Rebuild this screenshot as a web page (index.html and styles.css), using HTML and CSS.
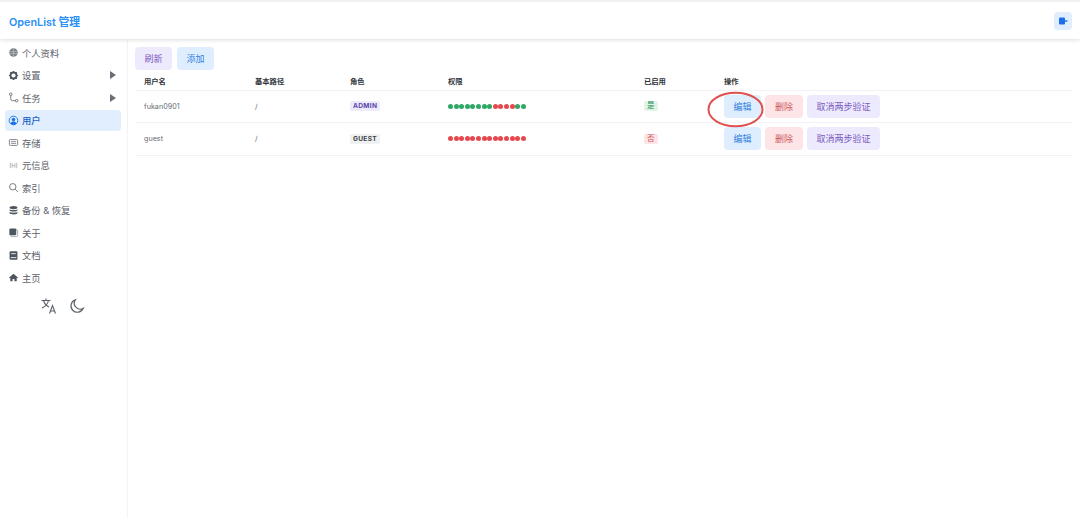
FILE: index.html
```html
<!DOCTYPE html>
<html lang="en">
<head>
  <meta charset="UTF-8">
  <title>OpenList 管理</title>
  <link rel="stylesheet" href="styles.css">
</head>
<body>

<header class="topbar">
  <div class="brand">OpenList 管理</div>
  <button class="logout" aria-label="logout">
    <svg width="10" height="10" viewBox="0 0 10 10"><rect x="1" y="1.5" width="6" height="7" rx="1" fill="#1a6fe8"/><path d="M7 5h2.5" stroke="#1a6fe8" stroke-width="1.4"/></svg>
  </button>
</header>

<div class="layout">
  <nav class="sidebar">
    <a class="nav-item">
      <svg class="nav-icon" viewBox="0 0 12 12"><circle cx="6" cy="6" r="4.6" fill="#7b8088"/><path d="M2 5h8M2 7.2h8M6 1.5v9" stroke="#c4c6ca" stroke-width=".7"/></svg>
      个人资料
    </a>
    <a class="nav-item">
      <svg class="nav-icon" viewBox="0 0 12 12"><circle cx="6" cy="6" r="3.3" fill="none" stroke="#4f555e" stroke-width="2"/><path d="M6 1v10M1 6h10M2.5 2.5l7 7M9.500 2.500l-7 7" stroke="#4f555e" stroke-width="1.300" stroke-dasharray="1.600 7"/></svg>
      设置
      <span class="caret"></span>
    </a>
    <a class="nav-item">
      <svg class="nav-icon" viewBox="0 0 12 12" fill="none" stroke="#5c626b" stroke-width=".9"><circle cx="3" cy="2.500" r="1.400"/><circle cx="9.500" cy="9.500" r="1.400"/><path d="M3 4v3.500a2 2 0 0 0 2 2h3"/></svg>
      任务
      <span class="caret"></span>
    </a>
    <a class="nav-item active">
      <svg class="nav-icon" viewBox="0 0 12 12"><circle cx="6" cy="6" r="4.700" fill="none" stroke="#1a6fe8" stroke-width="1"/><circle cx="6" cy="4.800" r="1.900" fill="#1a6fe8"/><path d="M2.800 9.200c.6-1.600 1.800-2.200 3.200-2.200s2.600.6 3.200 2.200a4.600 4.600 0 0 1-6.400 0z" fill="#1a6fe8"/></svg>
      用户
    </a>
    <a class="nav-item">
      <svg class="nav-icon" viewBox="0 0 12 12" fill="none" stroke="#6a7078" stroke-width=".9"><rect x="1.500" y="2.800" width="9" height="6.400" rx="1"/><path d="M3.200 5h5.600M3.200 7h5.600" stroke-width=".8"/></svg>
      存储
    </a>
    <a class="nav-item">
      <svg class="nav-icon" viewBox="0 0 12 12" fill="none" stroke="#a0a4aa" stroke-width=".8"><path d="M2.500 3v6M9.500 3v6M4.500 3.500v5M7.500 3.500v5M4.500 6h3"/></svg>
      元信息
    </a>
    <a class="nav-item">
      <svg class="nav-icon" viewBox="0 0 12 12" fill="none" stroke="#5c626b" stroke-width=".9"><circle cx="5.200" cy="5.200" r="3.500"/><path d="M8 8l2.800 2.800"/></svg>
      索引
    </a>
    <a class="nav-item">
      <svg class="nav-icon" viewBox="0 0 12 12" fill="#4f555e"><ellipse cx="6" cy="2.800" rx="4.300" ry="1.700"/><path d="M1.700 4.500c1 1.300 7.600 1.300 8.600 0v1.600c-1 1.400-7.600 1.400-8.600 0zM1.700 7.400c1 1.300 7.600 1.300 8.600 0v1.700c-1 1.700-7.600 1.700-8.600 0z"/></svg>
      备份 &amp; 恢复
    </a>
    <a class="nav-item">
      <svg class="nav-icon" viewBox="0 0 12 12"><rect x="3" y="3" width="7.500" height="7.500" rx="1.200" fill="none" stroke="#7b8088" stroke-width=".7"/><rect x="1.500" y="1.500" width="7.500" height="7.500" rx="1.200" fill="#4f555e"/></svg>
      关于
    </a>
    <a class="nav-item">
      <svg class="nav-icon" viewBox="0 0 12 12"><path d="M3 1.300h6.500a.8.8 0 0 1 .8.8v7.800a.8.8 0 0 1-.8.800H3a1.300 1.300 0 0 1-1.300-1.300V2.600A1.300 1.300 0 0 1 3 1.300z" fill="#4f555e"/><path d="M3.500 4h5M3 8.300h6" stroke="#fff" stroke-width=".9"/></svg>
      文档
    </a>
    <a class="nav-item">
      <svg class="nav-icon" viewBox="0 0 12 12" fill="#4f555e"><path d="M6 1.800L.9 6.300l.6.600 1-.8V10.200h2.500V7.500h2v2.700h2.500V6.100l1 .8.600-.6z"/></svg>
      主页
    </a>
    <div class="sidebar-tools">
      <svg width="18" height="18" viewBox="0 0 18 18" fill="none" stroke="#5c626b" stroke-width="1.100"><path d="M1.500 3.500h9M6 1.500v2M8.500 3.500c-.8 3.500-3 6-6.500 7.500M3.500 3.500c.8 3 3 5.200 5.500 6.500"/><path d="M9.500 16.500l3-8 3 8M10.500 14h4"/></svg>
      <svg width="16" height="16" viewBox="0 0 16 16" fill="none" stroke="#5c626b" stroke-width="1.200"><path d="M6.300 1.800a6.400 6.400 0 1 0 8 8.500 6 6 0 0 1-8-8.500z"/></svg>
    </div>
  </nav>

  <main class="content">
    <div class="toolbar">
      <button class="btn purple">刷新</button>
      <button class="btn blue">添加</button>
    </div>

    <table class="users">
      <thead>
        <tr>
          <th class="col-name">用户名</th>
          <th class="col-path">基本路径</th>
          <th class="col-role">角色</th>
          <th class="col-perm">权限</th>
          <th class="col-on">已启用</th>
          <th>操作</th>
        </tr>
      </thead>
      <tbody>
        <tr>
          <td>fukan0901</td>
          <td>/</td>
          <td><span class="role admin">ADMIN</span></td>
          <td>
            <div class="dots">
              <i class="g"></i><i class="g"></i><i class="g"></i><i class="g"></i><i class="g"></i><i class="g"></i><i class="g"></i><i class="g"></i><i class="r"></i><i class="r"></i><i class="r"></i><i class="r"></i><i class="g"></i><i class="g"></i>
            </div>
          </td>
          <td><span class="flag yes">是</span></td>
          <td>
            <div class="actions">
              <button class="btn blue edit">编辑
                <svg class="mark" width="57" height="37" viewBox="0 0 57 37"><ellipse cx="28.500" cy="18.500" rx="27" ry="16.800" fill="none" stroke="#e0504f" stroke-width="2"/></svg>
              </button>
              <button class="btn red">删除</button>
              <button class="btn purple">取消两步验证</button>
            </div>
          </td>
        </tr>
        <tr>
          <td>guest</td>
          <td>/</td>
          <td><span class="role guest">GUEST</span></td>
          <td>
            <div class="dots">
              <i class="r"></i><i class="r"></i><i class="r"></i><i class="r"></i><i class="r"></i><i class="r"></i><i class="r"></i><i class="r"></i><i class="r"></i><i class="r"></i><i class="r"></i><i class="r"></i><i class="r"></i><i class="r"></i>
            </div>
          </td>
          <td><span class="flag no">否</span></td>
          <td>
            <div class="actions">
              <button class="btn blue">编辑</button>
              <button class="btn red">删除</button>
              <button class="btn purple">取消两步验证</button>
            </div>
          </td>
        </tr>
      </tbody>
    </table>
  </main>
</div>

</body>
</html>
```

FILE: styles.css
```css
* {
  box-sizing: border-box;
}

body {
  margin: 0;
  height: 518px;
  overflow: hidden;
  background: #fff;
  color: #555b64;
  font-family: "Inter", "Noto Sans CJK SC", sans-serif;
  font-size: 9px;
}

.topbar {
  height: 37px;
  margin-top: 2px;
  padding: 0 8px 0 9px;
  display: flex;
  align-items: center;
  justify-content: space-between;
  background: #fff;
  box-shadow: 0 -2px 0 #f1f1f2, 0 1px 4px rgba(0,0,0,0.14);
  position: relative;
}

.brand {
  color: #2a90f5;
  font-size: 10.800px;
  font-weight: 600;
}

.logout {
  width: 18px;
  height: 18px;
  padding: 0;
  border: none;
  border-radius: 4px;
  background: #e0edfd;
  display: flex;
  align-items: center;
  justify-content: center;
}

.layout {
  display: flex;
  height: 479px;
}

.sidebar {
  width: 128px;
  padding: 3.500px 6px 0 5px;
  border-right: 1px solid #f2f3f4;
}

.nav-item {
  height: 20.500px;
  margin-bottom: 2px;
  padding-left: 3px;
  border-radius: 4px;
  display: flex;
  align-items: center;
  gap: 3px;
  color: #5d636c;
  font-size: 9.300px;
}

.nav-item.active {
  background: #e0eefe;
  color: #1b62c9;
  font-weight: 500;
}

.nav-icon {
  width: 11px;
  height: 11px;
  flex: none;
}

.caret {
  margin-left: auto;
  margin-right: 5px;
  border-left: 6px solid #6a6f77;
  border-top: 4.500px solid transparent;
  border-bottom: 4.500px solid transparent;
}

.sidebar-tools {
  margin-top: 8.500px;
  padding-right: 1px;
  display: flex;
  justify-content: center;
  align-items: center;
  gap: 11px;
}

.content {
  flex: 1;
  padding: 8px 8px 0 7px;
}

.toolbar {
  display: flex;
  gap: 5px;
}

.btn {
  height: 23px;
  padding: 0 9.500px;
  border: none;
  border-radius: 4px;
  font-family: inherit;
  font-size: 9px;
  white-space: nowrap;
}

.btn.purple {
  background: #eeeafd;
  color: #7a5bc0;
}

.btn.blue {
  background: #dfeeff;
  color: #2f7de0;
}

.btn.red {
  padding: 0 10px;
  background: #fde4e6;
  color: #cf5a60;
}

.users {
  width: 100%;
  margin-top: 0;
  border-collapse: collapse;
  table-layout: fixed;
}

.users th {
  height: 20px;
  padding: 3px 0 0 9px;
  text-align: left;
  color: #30343a;
  font-size: 7.300px;
  font-weight: 600;
  border-bottom: 1px solid #f1f2f3;
}

.users td {
  height: 32.500px;
  padding: 0 0 0 9px;
  color: #666b73;
  font-size: 7.200px;
  border-bottom: 1px solid #f1f2f3;
}

.col-name { width: 111px; }
.col-path { width: 95px; }
.col-role { width: 98px; }
.col-perm { width: 196px; }
.col-on { width: 80px; }

.role {
  display: inline-block;
  padding: 0 3px;
  border-radius: 2px;
  font-size: 6.600px;
  font-weight: 700;
  line-height: 10px;
  letter-spacing: 0.3px;
}

.role.admin {
  background: #eeeafd;
  color: #5b47a8;
}

.role.guest {
  background: #eff0f1;
  color: #3c4046;
}

.dots {
  display: flex;
  gap: 0.600px;
}

.dots i {
  width: 5px;
  height: 5px;
  border-radius: 50%;
}

.dots .g { background: #2fa866; }
.dots .r { background: #e5484d; }

.flag {
  display: inline-block;
  padding: 0 3px;
  border-radius: 2px;
  font-size: 7.500px;
  line-height: 10px;
}

.flag.yes {
  background: #dff5e6;
  color: #2a8a57;
}

.flag.no {
  background: #fde4e6;
  color: #d2555b;
}

.actions {
  display: flex;
  gap: 4px;
}

.edit {
  position: relative;
}

.mark {
  position: absolute;
  left: -17px;
  top: -4px;
}
```
